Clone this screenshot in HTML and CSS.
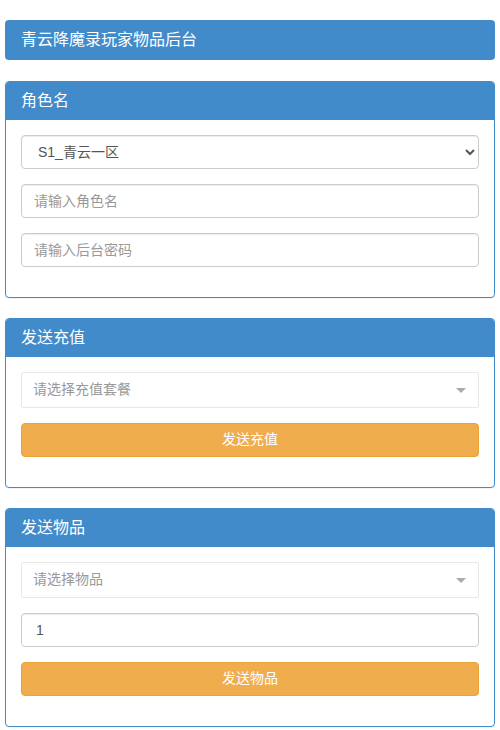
FILE: index.html
```html
<!DOCTYPE html>
<html lang="zh-CN">
<head>
<meta charset="utf-8">
<title>青云降魔录玩家物品后台</title>
<link rel="stylesheet" href="styles.css">
</head>
<body>
<div class="page">
  <div class="title-bar">青云降魔录玩家物品后台</div>

  <div class="panel">
    <div class="panel-heading">角色名</div>
    <div class="panel-body">
      <div class="form-group">
        <select class="form-control">
          <option>S1_青云一区</option>
        </select>
      </div>
      <div class="form-group">
        <input class="form-control" type="text" placeholder="请输入角色名">
      </div>
      <div class="form-group">
        <input class="form-control" type="password" placeholder="请输入后台密码">
      </div>
    </div>
  </div>

  <div class="panel">
    <div class="panel-heading">发送充值</div>
    <div class="panel-body">
      <div class="form-group">
        <div class="picker">
          <span class="picker-text">请选择充值套餐</span>
          <span class="picker-arrow"></span>
        </div>
      </div>
      <div class="form-group">
        <button class="btn" type="button">发送充值</button>
      </div>
    </div>
  </div>

  <div class="panel">
    <div class="panel-heading">发送物品</div>
    <div class="panel-body">
      <div class="form-group">
        <div class="picker">
          <span class="picker-text">请选择物品</span>
          <span class="picker-arrow"></span>
        </div>
      </div>
      <div class="form-group">
        <input class="form-control qty" type="text" value="1">
      </div>
      <div class="form-group">
        <button class="btn" type="button">发送物品</button>
      </div>
    </div>
  </div>
</div>
</body>
</html>
```

FILE: styles.css
```css
* { box-sizing: border-box; }

html, body {
  margin: 0;
  padding: 0;
  background: #fff;
}

body {
  font-family: "Liberation Sans", Arial, "Noto Sans CJK SC", sans-serif;
  font-size: 14px;
  line-height: 1.42857;
  color: #333;
}

.page {
  padding: 20px 5px 0;
}

.title-bar {
  background: #428bca;
  color: #fff;
  font-size: 16px;
  line-height: 20px;
  padding: 10px 16px;
  border-radius: 4px;
  margin-bottom: 21px;
}

.panel {
  border: 1px solid #428bca;
  border-radius: 4px;
  margin-bottom: 20px;
  background: #fff;
  box-shadow: 0 1px 1px rgba(0,0,0,.05);
}

.panel-heading {
  background: #428bca;
  color: #fff;
  font-size: 16px;
  line-height: 17px;
  padding: 10px 15px;
  border-bottom: 1px solid #428bca;
  border-radius: 3px 3px 0 0;
}

.panel-body {
  padding: 15px;
}

.form-group {
  margin-bottom: 15px;
}

.form-control {
  display: block;
  width: 100%;
  height: 34px;
  padding: 6px 12px;
  font-family: inherit;
  font-size: 14px;
  line-height: 1.42857;
  color: #555;
  background: #fff;
  border: 1px solid #ccc;
  border-radius: 4px;
  box-shadow: inset 0 1px 1px rgba(0,0,0,.075);
}

.form-control.qty {
  padding-left: 14px;
}

.form-control::placeholder {
  color: #999;
}

.picker {
  display: flex;
  align-items: center;
  justify-content: space-between;
  height: 36px;
  padding: 0 12px 0 11px;
  border: 1px solid #e8e8e8;
  border-radius: 2px;
  background: #fff;
}

.picker-text {
  color: #999;
  font-size: 14px;
}

.picker-arrow {
  width: 0;
  height: 0;
  border-left: 5px solid transparent;
  border-right: 5px solid transparent;
  border-top: 5px solid #aaa;
}

.btn {
  display: block;
  width: 100%;
  height: 34px;
  padding: 6px 12px;
  font-family: inherit;
  font-size: 14px;
  line-height: 1.42857;
  color: #fff;
  background: #f0ad4e;
  border: 1px solid #eea236;
  border-radius: 4px;
  text-align: center;
  cursor: pointer;
}
```
